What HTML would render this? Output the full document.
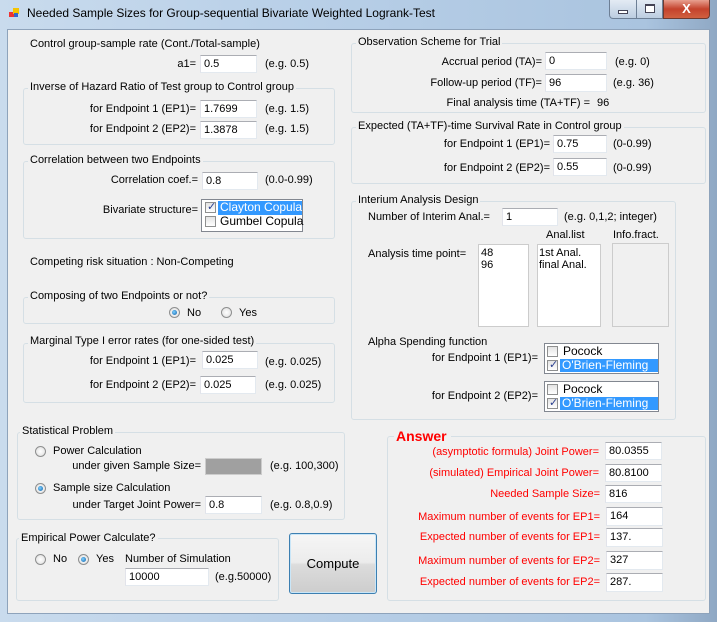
<!DOCTYPE html><html><head><meta charset="utf-8"><style>
body{margin:0;width:717px;height:622px;position:relative;overflow:hidden;background:linear-gradient(90deg,#c9dbed,#b9d0e8 40%,#aac4df 90%,#8fa8c4);font-family:"Liberation Sans",sans-serif;font-size:11px;color:#000}
div{position:absolute;white-space:nowrap}
.t{line-height:13px}
.r{text-align:right}
.in{background:#fff;border:1px solid #abadb3;border-color:#abadb3 #e3e9ef #e3e9ef #e2e3ea;box-sizing:border-box;padding:2px 3px;line-height:12px}
.g{border:1px solid #d5dfe5;border-radius:3px;box-sizing:border-box}
.gl{background:#f0f0f0;padding:0 2px;line-height:13px}
.rad{width:11px;height:11px;border-radius:50%;border:1px solid #8e8f8f;background:radial-gradient(#fff,#dcdcdc);box-sizing:border-box}
.rad.on::after{content:"";position:absolute;left:2px;top:2px;width:5px;height:5px;border-radius:50%;background:radial-gradient(circle at 40% 40%,#7fd0ff,#0a5ea8)}
.cb{width:11px;height:11px;border:1px solid #8e8f8f;background:linear-gradient(#e4e4e4,#fff);box-sizing:border-box}
.lb{background:#fff;border:1px solid #828790;box-sizing:border-box}
.sel{background:#3399ff;color:#fff}
.red{color:#f00}
</style></head><body>
<div style="left:9px;top:8px;width:10px;height:10px"><div style="left:0;top:4px;width:5px;height:5px;background:#e33"></div><div style="left:4px;top:0;width:6px;height:6px;background:#f5c400"></div><div style="left:5px;top:5px;width:4px;height:4px;background:#36c"></div></div>
<div class="t" style="left:27px;top:7px;font-size:12px">Needed Sample Sizes for Group-sequential Bivariate Weighted Logrank-Test</div>
<div style="left:609px;top:0;width:28px;height:19px;border:1px solid #6d7f95;border-top:0;border-radius:0 0 0 4px;background:linear-gradient(#e3ebf4,#bccde0);box-sizing:border-box"><div style="left:8px;top:10px;width:10px;height:4px;background:#fff;border:1px solid #445;box-sizing:border-box"></div></div>
<div style="left:637px;top:0;width:26px;height:19px;border:1px solid #6d7f95;border-top:0;border-left:0;background:linear-gradient(#e3ebf4,#bccde0);box-sizing:border-box"><div style="left:8px;top:4px;width:10px;height:9px;border:1px solid #445;border-top-width:2px;background:#fff;box-sizing:border-box"></div></div>
<div style="left:663px;top:0;width:47px;height:19px;border:1px solid #6d3a30;border-top:0;border-radius:0 0 4px 0;background:linear-gradient(#e8a090,#c4422c 50%,#d06040);box-sizing:border-box;color:#fff;font-weight:bold;font-size:13px;text-align:center;line-height:17px">X</div>
<div style="left:7px;top:29px;width:703px;height:585px;background:#f0f0f0;border:1px solid #8ea3bb;box-sizing:border-box"></div>

<div class="t" style="left:30px;top:38px">Control group-sample rate (Cont./Total-sample)</div>
<div class="t r" style="left:0;width:196px;top:58px">a1=</div>
<div class="in" style="left:200px;top:55px;width:57px;height:18px">0.5</div>
<div class="t" style="left:265px;top:58px">(e.g. 0.5)</div>

<div class="g" style="left:23px;top:88px;width:312px;height:57px"></div>
<div class="t gl" style="left:28px;top:81px">Inverse of Hazard Ratio of Test group to Control group</div>
<div class="t r" style="left:0;width:196px;top:103px">for Endpoint 1 (EP1)=</div>
<div class="in" style="left:200px;top:100px;width:57px;height:18px">1.7699</div>
<div class="t" style="left:265px;top:103px">(e.g. 1.5)</div>
<div class="t r" style="left:0;width:196px;top:123px">for Endpoint 2 (EP2)=</div>
<div class="in" style="left:200px;top:121px;width:57px;height:18px">1.3878</div>
<div class="t" style="left:265px;top:123px">(e.g. 1.5)</div>

<div class="g" style="left:23px;top:161px;width:312px;height:78px"></div>
<div class="t gl" style="left:28px;top:154px">Correlation between two Endpoints</div>
<div class="t r" style="left:0;width:198px;top:174px">Correlation coef.=</div>
<div class="in" style="left:202px;top:172px;width:56px;height:18px">0.8</div>
<div class="t" style="left:265px;top:174px">(0.0-0.99)</div>
<div class="t r" style="left:0;width:198px;top:204px">Bivariate structure=</div>
<div class="lb" style="left:201px;top:199px;width:102px;height:33px"></div>
<div class="cb" style="left:205px;top:202px"><div style="left:1px;top:-3px;color:#2a3f8f;font-size:11px">✓</div></div>
<div class="t sel" style="left:218px;top:201px;width:82px;height:14px;padding-left:2px;font-size:12px">Clayton Copula</div>
<div class="cb" style="left:205px;top:216px"></div>
<div class="t" style="left:220px;top:215px;font-size:12px">Gumbel Copula</div>

<div class="t" style="left:30px;top:256px">Competing risk situation : Non-Competing</div>

<div class="g" style="left:23px;top:297px;width:312px;height:27px"></div>
<div class="t gl" style="left:28px;top:290px">Composing of two Endpoints or not?</div>
<div class="rad on" style="left:169px;top:307px"></div><div class="t" style="left:187px;top:307px">No</div>
<div class="rad" style="left:221px;top:307px"></div><div class="t" style="left:239px;top:307px">Yes</div>

<div class="g" style="left:23px;top:343px;width:312px;height:60px"></div>
<div class="t gl" style="left:28px;top:335px">Marginal Type I error rates (for one-sided test)</div>
<div class="t r" style="left:0;width:196px;top:355px">for Endpoint 1 (EP1)=</div>
<div class="in" style="left:202px;top:351px;width:56px;height:18px">0.025</div>
<div class="t" style="left:265px;top:356px">(e.g. 0.025)</div>
<div class="t r" style="left:0;width:196px;top:379px">for Endpoint 2 (EP2)=</div>
<div class="in" style="left:200px;top:376px;width:56px;height:18px">0.025</div>
<div class="t" style="left:265px;top:379px">(e.g. 0.025)</div>

<div class="g" style="left:17px;top:432px;width:328px;height:88px"></div>
<div class="t gl" style="left:20px;top:425px">Statistical Problem</div>
<div class="rad" style="left:35px;top:446px"></div><div class="t" style="left:53px;top:445px">Power Calculation</div>
<div class="t r" style="left:0;width:201px;top:460px">under given Sample Size=</div>
<div style="left:205px;top:458px;width:57px;height:17px;background:#a0a0a0;border:1px solid #ccc;box-sizing:border-box"></div>
<div class="t" style="left:270px;top:460px">(e.g. 100,300)</div>
<div class="rad on" style="left:35px;top:483px"></div><div class="t" style="left:53px;top:482px">Sample size Calculation</div>
<div class="t r" style="left:0;width:201px;top:499px">under Target Joint Power=</div>
<div class="in" style="left:205px;top:496px;width:57px;height:18px">0.8</div>
<div class="t" style="left:270px;top:499px">(e.g. 0.8,0.9)</div>

<div class="g" style="left:16px;top:538px;width:263px;height:63px"></div>
<div class="t gl" style="left:19px;top:532px">Empirical Power Calculate?</div>
<div class="rad" style="left:35px;top:554px"></div><div class="t" style="left:53px;top:553px">No</div>
<div class="rad on" style="left:78px;top:554px"></div><div class="t" style="left:96px;top:553px">Yes</div>
<div class="t" style="left:125px;top:553px">Number of Simulation</div>
<div class="in" style="left:125px;top:568px;width:84px;height:18px">10000</div>
<div class="t" style="left:215px;top:571px">(e.g.50000)</div>

<div style="left:289px;top:533px;width:88px;height:61px;border:1px solid #3c7fb1;border-radius:3px;box-sizing:border-box;background:linear-gradient(#f6f6f6 0,#ececec 48%,#dcdcdc 52%,#cdcdcd);box-shadow:inset 0 0 0 1px #c9e6f8;text-align:center;line-height:59px;font-size:13px">Compute</div>

<div class="g" style="left:351px;top:43px;width:355px;height:70px"></div>
<div class="t gl" style="left:356px;top:36px">Observation Scheme for Trial</div>
<div class="t r" style="left:0;width:542px;top:56px">Accrual period (TA)=</div>
<div class="in" style="left:545px;top:52px;width:62px;height:18px">0</div>
<div class="t" style="left:615px;top:56px">(e.g. 0)</div>
<div class="t r" style="left:0;width:542px;top:77px">Follow-up period (TF)=</div>
<div class="in" style="left:545px;top:74px;width:62px;height:18px">96</div>
<div class="t" style="left:613px;top:77px">(e.g. 36)</div>
<div class="t r" style="left:0;width:590px;top:97px">Final analysis time (TA+TF) =</div>
<div class="t" style="left:597px;top:97px">96</div>

<div class="g" style="left:351px;top:127px;width:355px;height:57px"></div>
<div class="t gl" style="left:356px;top:120px">Expected (TA+TF)-time Survival Rate in Control group</div>
<div class="t r" style="left:0;width:550px;top:138px">for Endpoint 1 (EP1)=</div>
<div class="in" style="left:553px;top:135px;width:54px;height:18px">0.75</div>
<div class="t" style="left:613px;top:138px">(0-0.99)</div>
<div class="t r" style="left:0;width:550px;top:162px">for Endpoint 2 (EP2)=</div>
<div class="in" style="left:553px;top:158px;width:54px;height:18px">0.55</div>
<div class="t" style="left:613px;top:162px">(0-0.99)</div>

<div class="g" style="left:351px;top:201px;width:325px;height:219px"></div>
<div class="t gl" style="left:356px;top:194px">Interium Analysis Design</div>
<div class="t" style="left:368px;top:211px">Number of Interim Anal.=</div>
<div class="in" style="left:502px;top:208px;width:56px;height:18px">1</div>
<div class="t" style="left:564px;top:211px">(e.g. 0,1,2; integer)</div>
<div class="t" style="left:546px;top:229px">Anal.list</div>
<div class="t" style="left:613px;top:229px">Info.fract.</div>
<div class="t" style="left:368px;top:248px">Analysis time point=</div>
<div class="lb" style="left:478px;top:244px;width:51px;height:83px;border-color:#ccc"></div>
<div class="t" style="left:481px;top:247px;line-height:12px">48<br>96</div>
<div class="lb" style="left:537px;top:244px;width:64px;height:83px;border-color:#ccc"></div>
<div class="t" style="left:539px;top:247px;line-height:12px">1st Anal.<br>final Anal.</div>
<div style="left:612px;top:243px;width:57px;height:84px;border:1px solid #ccc;box-sizing:border-box"></div>
<div class="t" style="left:368px;top:336px">Alpha Spending function</div>
<div class="t r" style="left:0;width:538px;top:352px">for Endpoint 1 (EP1)=</div>
<div class="lb" style="left:544px;top:343px;width:115px;height:31px"></div>
<div class="cb" style="left:547px;top:346px"></div><div class="t" style="left:563px;top:345px;font-size:12px">Pocock</div>
<div class="cb" style="left:547px;top:360px"><div style="left:1px;top:-3px;color:#2a3f8f">✓</div></div>
<div class="t sel" style="left:560px;top:359px;width:96px;height:13px;padding-left:2px;font-size:12px">O'Brien-Fleming</div>
<div class="t r" style="left:0;width:538px;top:390px">for Endpoint 2 (EP2)=</div>
<div class="lb" style="left:544px;top:381px;width:115px;height:31px"></div>
<div class="cb" style="left:547px;top:384px"></div><div class="t" style="left:563px;top:383px;font-size:12px">Pocock</div>
<div class="cb" style="left:547px;top:398px"><div style="left:1px;top:-3px;color:#2a3f8f">✓</div></div>
<div class="t sel" style="left:560px;top:397px;width:96px;height:13px;padding-left:2px;font-size:12px">O'Brien-Fleming</div>

<div class="g" style="left:387px;top:436px;width:319px;height:165px"></div>
<div class="t gl red" style="left:394px;top:428px;font-weight:bold;font-size:14px;line-height:16px;padding-right:4px">Answer</div>
<div class="t r red" style="left:0;width:599px;top:446px">(asymptotic formula) Joint Power=</div>
<div class="in" style="left:605px;top:442px;width:57px;height:18px">80.0355</div>
<div class="t r red" style="left:0;width:599px;top:467px">(simulated) Empirical Joint Power=</div>
<div class="in" style="left:605px;top:464px;width:57px;height:18px">80.8100</div>
<div class="t r red" style="left:0;width:600px;top:488px">Needed Sample Size=</div>
<div class="in" style="left:605px;top:485px;width:57px;height:18px">816</div>
<div class="t r red" style="left:0;width:600px;top:511px">Maximum number of events for EP1=</div>
<div class="in" style="left:606px;top:507px;width:57px;height:19px">164</div>
<div class="t r red" style="left:0;width:600px;top:531px">Expected number of events for EP1=</div>
<div class="in" style="left:606px;top:528px;width:57px;height:19px">137.</div>
<div class="t r red" style="left:0;width:600px;top:555px">Maximum number of events for EP2=</div>
<div class="in" style="left:606px;top:551px;width:57px;height:19px">327</div>
<div class="t r red" style="left:0;width:600px;top:576px">Expected number of events for EP2=</div>
<div class="in" style="left:606px;top:573px;width:57px;height:19px">287.</div>
</body></html>
